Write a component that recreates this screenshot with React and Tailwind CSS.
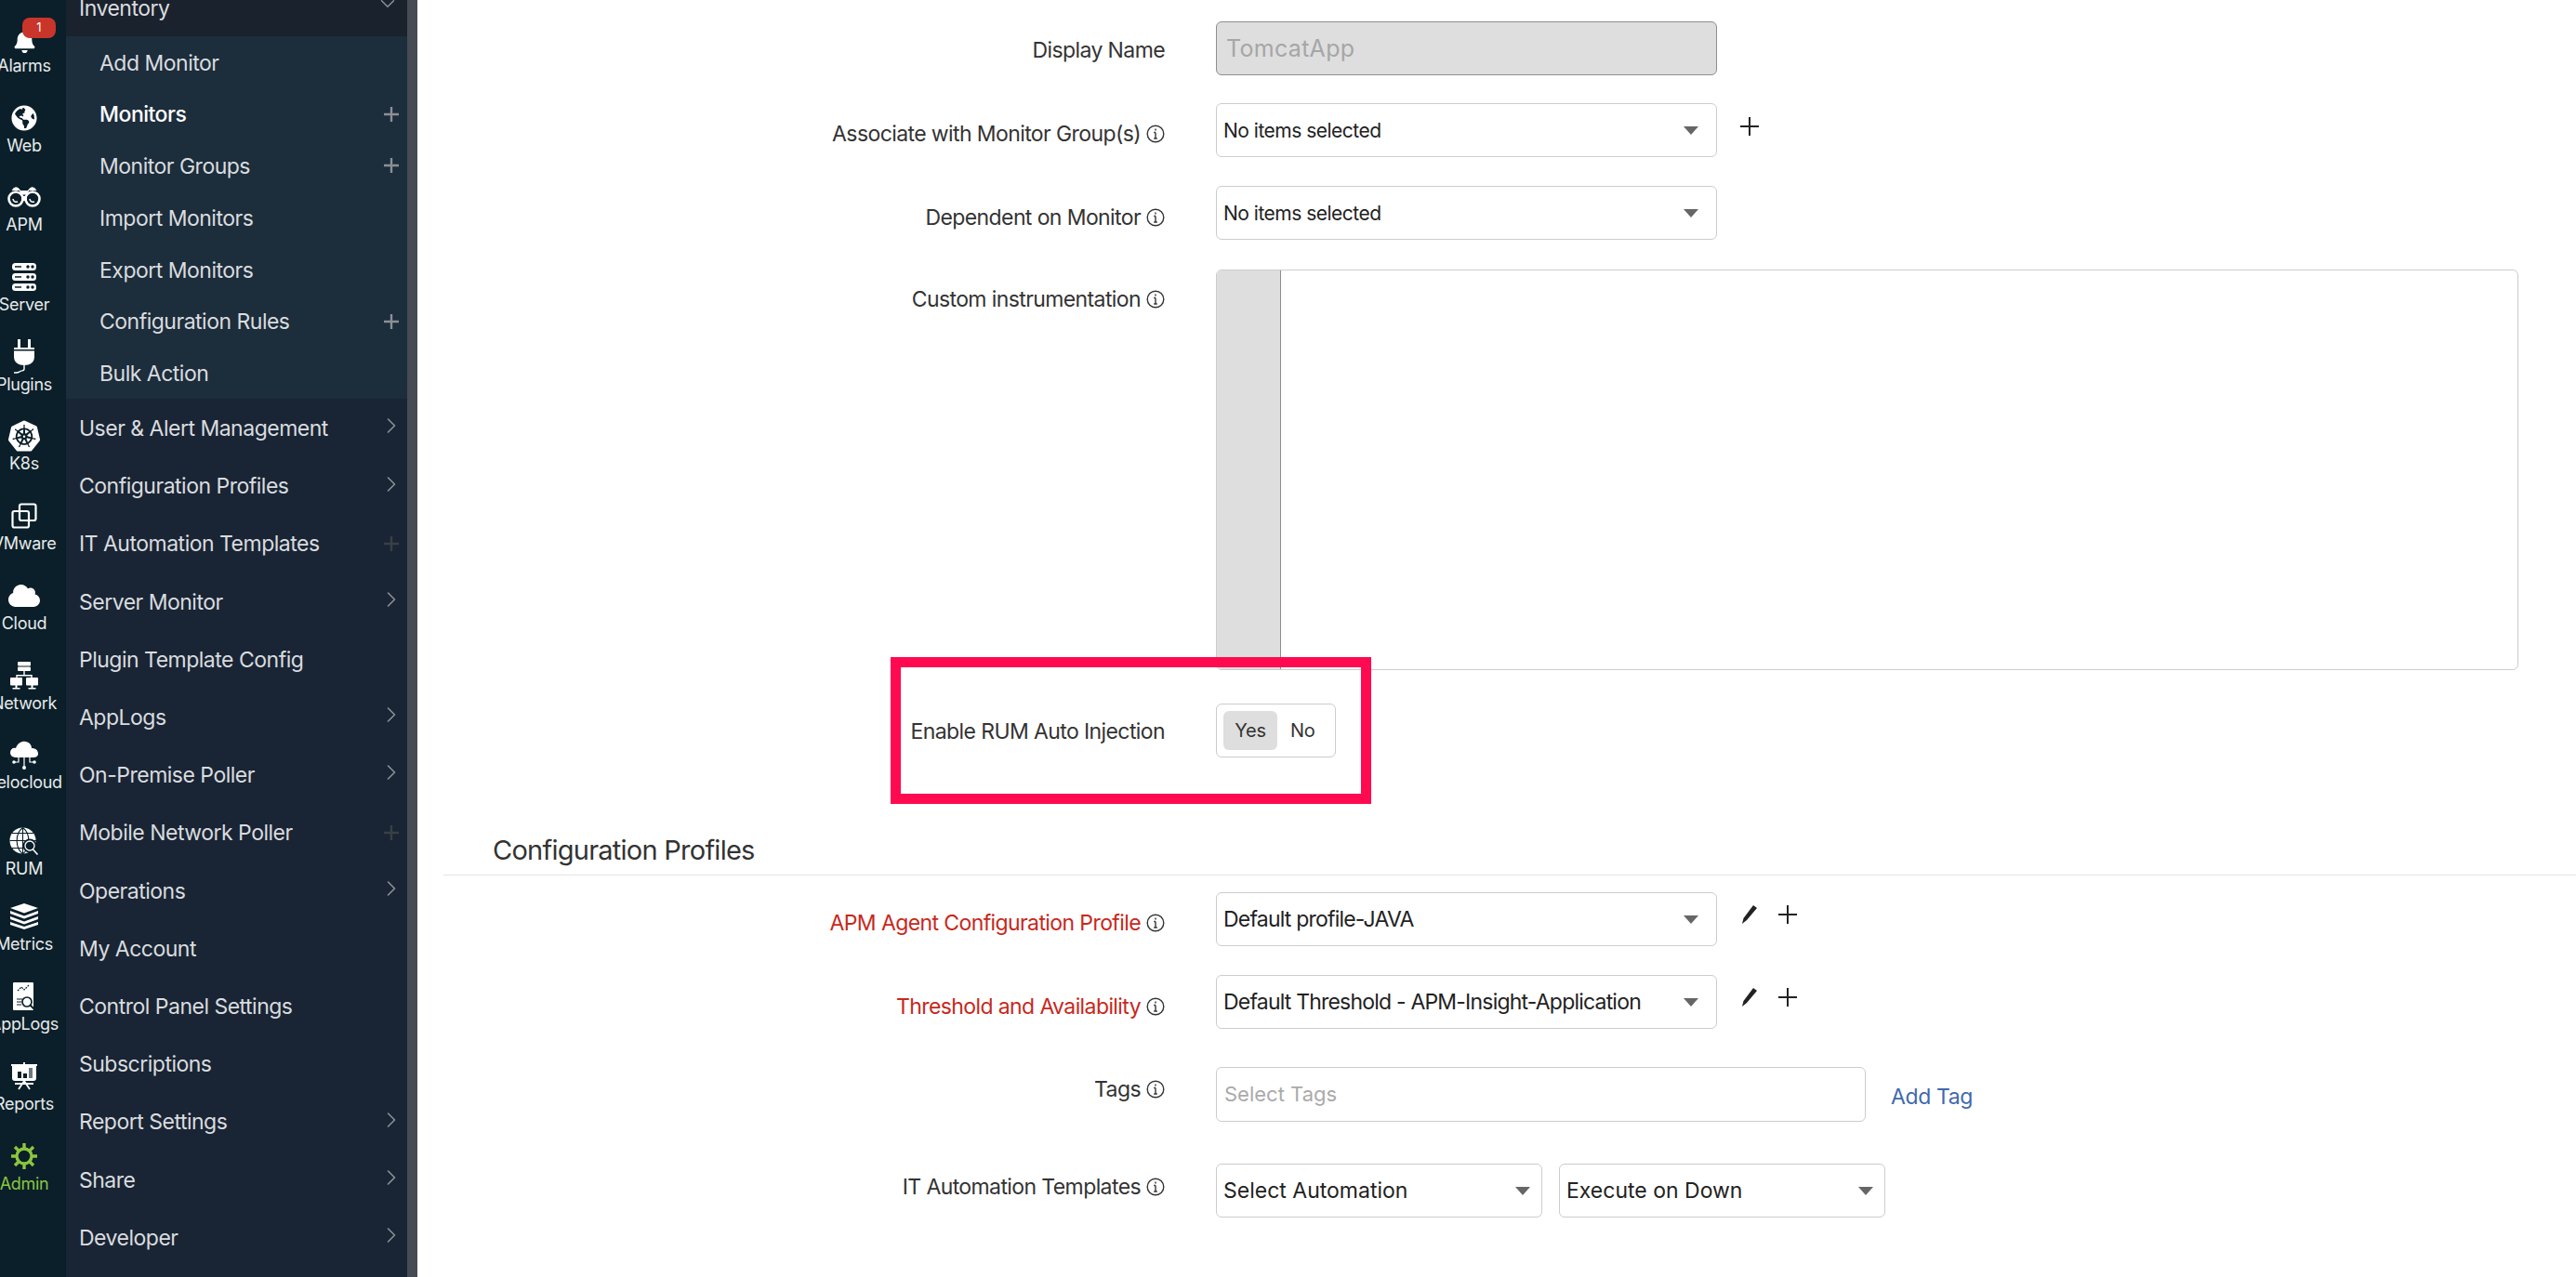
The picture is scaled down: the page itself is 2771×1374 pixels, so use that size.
import { ChevronRight, ChevronDown } from 'lucide-react';
import { FaBell, FaGlobeAmericas, FaCloud } from 'react-icons/fa';
import { SiKubernetes } from 'react-icons/si';

const Binoculars = () => (
  <svg width="36" height="24" viewBox="0 0 36 24" fill="none" stroke="white">
    <circle cx="9" cy="14" r="7.5" strokeWidth="2.6" />
    <circle cx="27" cy="14" r="7.5" strokeWidth="2.6" />
    <path d="M5 5 C7 1 11 1 13 4 L15 9 H21 L23 4 C25 1 29 1 31 5" fill="white" strokeWidth="1" />
    <path d="M15 11 h6 v5 h-6z" fill="white" strokeWidth="0" />
    <path d="M6 14 a3.5 3.5 0 0 0 5 3 M24 14 a3.5 3.5 0 0 0 5 3" strokeWidth="1.5" />
  </svg>
);

const Server = () => (
  <svg width="28" height="30" viewBox="0 0 28 30" fill="white">
    {[0, 11, 22].map(y => (
      <g key={y}>
        <rect x="1" y={y} width="26" height="8" rx="3.5" />
        <rect x="4" y={y + 3.2} width="7" height="1.5" fill="#0a1f29" />
        <circle cx="18" cy={y + 4} r="1.7" fill="#0a1f29" />
        <circle cx="23" cy={y + 4} r="1.7" fill="#0a1f29" />
      </g>
    ))}
  </svg>
);

const Plug = () => (
  <svg width="24" height="38" viewBox="0 0 24 38" fill="white">
    <rect x="5" y="0" width="3" height="9" />
    <rect x="16" y="0" width="3" height="9" />
    <rect x="1" y="9" width="22" height="2" />
    <path d="M1 12.5 H23 V19 C23 25 18 28 12 28 C6 28 1 25 1 19Z" />
    <path d="M12 28 V32 C12 35 9 33 7 35 C6 36 4 36 1 36" fill="none" stroke="white" strokeWidth="1.4" />
  </svg>
);

const VMware = () => (
  <svg width="28" height="28" viewBox="0 0 28 28" fill="none" stroke="white" strokeWidth="2.2">
    <rect x="9" y="1.5" width="17.5" height="17.5" rx="2" />
    <rect x="1.5" y="9" width="17.5" height="17.5" rx="2" />
  </svg>
);

const Network = () => (
  <svg width="30" height="30" viewBox="0 0 30 30" fill="white">
    <rect x="8" y="0" width="14" height="4.5" rx="1" />
    <rect x="8" y="5.5" width="14" height="4.5" rx="1" />
    <path d="M14.3 10 h1.4 v4 h8 v3 h-1.4 v-1.6 H7.7 V17 H6.3 v-3 h8z" />
    <rect x="0" y="17" width="13" height="8.5" rx="1" />
    <rect x="17" y="17" width="13" height="8.5" rx="1" />
    <path d="M5.5 25 h2 v3 h3 v1.5 h-8 V28 h3z M22.5 25 h2 v3 h3 v1.5 h-8 V28 h3z" />
  </svg>
);

const Velocloud = () => (
  <svg width="30" height="31" viewBox="0 0 30 31" fill="white">
    <path d="M6 18 C1 18 0 14 0 13 C0 9 3 7 6 8 C8 2 13 0 17 1 C21 2 23 5 23 8 C27 8 30 10 30 14 C30 17 27 18 25 18Z" />
    <path d="M15 18 V29 M9 18 V23 H4 M21 18 V23 H26" fill="none" stroke="white" strokeWidth="1.2" />
    <circle cx="15" cy="29" r="2" />
    <circle cx="4" cy="23" r="1.8" />
    <circle cx="26" cy="23" r="1.8" />
  </svg>
);

const Rum = () => (
  <svg width="32" height="31" viewBox="0 0 32 31" fill="none">
    <circle cx="14.5" cy="14.5" r="14" fill="white" />
    <path d="M14.5 0.5 V29 M0.5 14.5 H29 M3 6.5 H26 M3 22.5 H26 M14.5 0.5 C6 7 6 22 14.5 29 M14.5 0.5 C23 7 23 22 14.5 29" stroke="#0a1f29" strokeWidth="1.1" />
    <circle cx="22" cy="20" r="7.5" fill="#0a1f29" />
    <circle cx="22" cy="20" r="5" stroke="white" strokeWidth="1.3" />
    <path d="M25.5 24 L30.5 29.5" stroke="white" strokeWidth="1.6" />
  </svg>
);

const Layers = () => (
  <svg width="32" height="28" viewBox="0 0 32 28" fill="white">
    <path d="M16 0 L31 5 L16 10.5 L1 5Z" />
    <path d="M1 8 L16 13.5 L31 8 V11 L16 16.5 L1 11Z" />
    <path d="M1 14 L16 19.5 L31 14 V17 L16 22.5 L1 17Z" />
    <path d="M1 20 L16 25 L31 20 V23 L16 28 L1 23Z" />
  </svg>
);

const AppLogsIcon = () => (
  <svg width="24" height="30" viewBox="0 0 24 30" fill="white">
    <path d="M1 0 H21 C22 0 22 1 22 1 V29 C22 30 21 30 21 30 H1 C0 30 0 29 0 29 V1 C0 0 1 0 1 0Z" />
    <path d="M5 9 L9 5 L12 8 L17 3" fill="none" stroke="#0a1f29" strokeWidth="1.2" strokeDasharray="2 1" />
    <path d="M4 18 h6 M4 21 h5 M4 24 h5" stroke="#0a1f29" strokeWidth="1.1" />
    <circle cx="15" cy="21" r="5" fill="white" stroke="#0a1f29" strokeWidth="1.7" />
    <path d="M18.5 24.5 L22.5 28.5" stroke="#0a1f29" strokeWidth="2" />
  </svg>
);

const Board = () => (
  <svg width="28" height="30" viewBox="0 0 28 30" fill="white">
    <rect x="0" y="2" width="28" height="2" />
    <path d="M1 4 H27 V17 C27 19 26 20 24 20 H4 C2 20 1 19 1 17Z" />
    <rect x="13" y="0" width="2" height="2" />
    <rect x="7" y="10" width="4" height="7" fill="#0a1f29" />
    <rect x="13" y="12" width="4" height="5" fill="#0a1f29" />
    <rect x="19" y="6" width="4" height="11" fill="#0a1f29" opacity="0.6" />
    <path d="M14 20 L8 29 M14 20 L20 29 M4 23 H24" stroke="white" strokeWidth="1.8" />
  </svg>
);

const Gear = () => (
  <svg width="30" height="30" viewBox="0 0 30 30" fill="none" stroke="#8cc63f">
    <circle cx="15" cy="15" r="8" strokeWidth="3.4" />
    <path d="M15 1 V7 M15 23 V29 M1 15 H7 M23 15 H29 M5 5 L9.5 9.5 M20.5 20.5 L25 25 M25 5 L20.5 9.5 M9.5 20.5 L5 25" strokeWidth="3.4" />
  </svg>
);

const rail = [
  { label: 'Alarms', icon: <FaBell size={25} color="white" className="mt-[6px]" />, h: 'h-[85.7px]', badge: true },
  { label: 'Web', icon: <FaGlobeAmericas size={28} color="white" />, h: 'h-[85.7px]' },
  { label: 'APM', icon: <Binoculars />, h: 'h-[85.7px]' },
  { label: 'Server', icon: <Server />, h: 'h-[85.7px]' },
  { label: 'Plugins', icon: <Plug />, h: 'h-[85.7px]' },
  { label: 'K8s', icon: <SiKubernetes size={34} color="white" />, h: 'h-[85.7px]' },
  { label: 'VMware', icon: <VMware />, h: 'h-[85.7px]' },
  { label: 'Cloud', icon: <FaCloud size={34} color="white" />, h: 'h-[85.7px]' },
  { label: 'Network', icon: <Network />, h: 'h-[85.7px]' },
  { label: 'Velocloud', icon: <Velocloud />, h: 'h-[93px]' },
  { label: 'RUM', icon: <Rum />, h: 'h-[81px]' },
  { label: 'Metrics', icon: <Layers />, h: 'h-[86px]' },
  { label: 'AppLogs', icon: <AppLogsIcon />, h: 'h-[86px]' },
  { label: 'Reports', icon: <Board />, h: 'h-[86px]' },
  { label: 'Admin', icon: <Gear />, h: 'h-[86px]', active: true },
];

const subItems = [
  { label: 'Add Monitor' },
  { label: 'Monitors', plus: true, bold: true },
  { label: 'Monitor Groups', plus: true },
  { label: 'Import Monitors' },
  { label: 'Export Monitors' },
  { label: 'Configuration Rules', plus: true },
  { label: 'Bulk Action' },
];

const menuItems = [
  { label: 'User & Alert Management', arrow: true },
  { label: 'Configuration Profiles', arrow: true },
  { label: 'IT Automation Templates', dimPlus: true },
  { label: 'Server Monitor', arrow: true },
  { label: 'Plugin Template Config' },
  { label: 'AppLogs', arrow: true },
  { label: 'On-Premise Poller', arrow: true },
  { label: 'Mobile Network Poller', dimPlus: true },
  { label: 'Operations', arrow: true },
  { label: 'My Account' },
  { label: 'Control Panel Settings' },
  { label: 'Subscriptions' },
  { label: 'Report Settings', arrow: true },
  { label: 'Share', arrow: true },
  { label: 'Developer', arrow: true },
];

function PlusIcon({ size = 16, color = '#8b8f95', width = 2.4 }) {
  return (
    <svg width={size} height={size} viewBox="0 0 16 16" stroke={color} strokeWidth={width}>
      <path d="M8 0 V16 M0 8 H16" />
    </svg>
  );
}

function Info() {
  return (
    <svg width="20" height="20" viewBox="0 0 20 20" fill="none" stroke="#333" className="ml-[6px] shrink-0">
      <circle cx="10" cy="10" r="8.8" strokeWidth="1.4" />
      <path d="M10 8.5 V15 M8.2 8.5 H10 M8.2 15 H11.8 M10 4.6 V6.6" strokeWidth="1.4" />
    </svg>
  );
}

function Pencil() {
  return (
    <svg width="18" height="20" viewBox="0 0 18 20" fill="#222">
      <path d="M13 0 L17 3 L6 16 L1 20 L2.5 14Z" />
    </svg>
  );
}

function Caret() {
  return (
    <svg width="16" height="9" viewBox="0 0 16 9" fill="#666" className="shrink-0">
      <path d="M0 0 H16 L8 9Z" />
    </svg>
  );
}

function Select({ value, className }) {
  return (
    <div className={`flex h-[58px] items-center justify-between rounded-[6px] border border-[#cccccc] bg-white pl-[7px] text-[#222] ${className}`}>
      <span className="mt-[1px] whitespace-nowrap">{value}</span>
      <Caret />
    </div>
  );
}

function Row({ label, info, red, labelTop, className = '', children }) {
  return (
    <div className={`flex items-start ${className}`}>
      <div className={`flex w-[804px] shrink-0 items-center justify-end text-[23px] leading-[30px] tracking-[-0.6px] ${labelTop} ${red ? 'text-[#c7281c]' : 'text-[#333]'}`}>
        <span className="whitespace-nowrap">{label}</span>
        {info && <Info />}
      </div>
      <div className="ml-[55px] flex flex-1 items-start">{children}</div>
    </div>
  );
}

export default function App() {
  return (
    <div className="relative flex h-[1374px] w-full overflow-hidden bg-white font-['Inter',sans-serif]">
      {/* Icon rail */}
      <div className="flex w-[71px] shrink-0 flex-col overflow-hidden bg-[#0a1f29] pt-[23px]">
        {rail.map(r => (
          <div key={r.label} className={`relative flex w-[52px] shrink-0 flex-col items-center ${r.h}`}>
            <div className="flex h-[36px] items-center justify-center">{r.icon}</div>
            <span className={`whitespace-nowrap text-[18px] leading-[24px] tracking-[-0.3px] ${r.active ? 'text-[#8cc63f]' : 'text-[#e8eaeb]'}`}>{r.label}</span>
            {r.badge && (
              <span className="absolute left-[24px] top-[-4px] flex h-[22px] w-[36px] items-center justify-center rounded-[8px] bg-[#c9352a] text-[13px] text-white">1</span>
            )}
          </div>
        ))}
      </div>

      {/* Menu */}
      <div className="w-[367px] shrink-0 bg-[#192535] text-[23px] tracking-[-0.5px] text-[#dadcdf]">
        <div className="-mt-[23px] flex h-[62px] items-center justify-between bg-[#1a222e] pl-[14px] pr-[8px]">
          <span className="mt-[2px]">Inventory</span>
          <ChevronDown size={26} color="#8b8f95" strokeWidth={1.4} className="-mt-[8px]" />
        </div>
        <div className="bg-[#1c2d3c]">
          {subItems.map(s => (
            <div key={s.label} className="flex h-[55.75px] items-center justify-between pl-[36px] pr-[9px]">
              <span className={`mt-[2px] ${s.bold ? 'font-medium text-white' : ''}`}>{s.label}</span>
              {s.plus && <PlusIcon />}
            </div>
          ))}
        </div>
        {menuItems.map(m => (
          <div key={m.label} className="flex h-[62.2px] items-center justify-between pl-[14px] pr-[9px]">
            <span className="mt-[2px]">{m.label}</span>
            {m.arrow && <ChevronRight size={28} color="#8b8f95" strokeWidth={1.4} className="-mr-[6px] -mt-[4px]" />}
            {m.dimPlus && <PlusIcon color="#3a3f45" />}
          </div>
        ))}
      </div>

      {/* Scrollbar track */}
      <div className="w-[11px] shrink-0 bg-[#474b53]" />

      {/* Form */}
      <div className="flex min-w-0 flex-1 flex-col pt-[23px]">
        <Row label="Display Name" labelTop="pt-[16px]">
          <div className="flex h-[58px] w-[539px] items-center rounded-[6px] border border-[#8e8e8e] bg-[#dedede] pl-[10px] text-[25px] tracking-[0.3px] text-[#a6a6a6]">
            <span className="mt-[1px]">TomcatApp</span>
          </div>
        </Row>
        <Row label="Associate with Monitor Group(s)" info labelTop="pt-[18px]" className="mt-[30px]">
          <Select value="No items selected" className="w-[539px] pr-[19px] text-[21px] tracking-[-0.5px]" />
          <div className="ml-[25px] mt-[15px]"><PlusIcon size={20} color="#222" width={1.6} /></div>
        </Row>
        <Row label="Dependent on Monitor" info labelTop="pt-[19px]" className="mt-[31px]">
          <Select value="No items selected" className="w-[539px] pr-[19px] text-[21px] tracking-[-0.5px]" />
        </Row>
        <Row label="Custom instrumentation" info labelTop="pt-[17px]" className="mt-[32px]">
          <div className="mr-[62px] flex h-[431px] flex-1 overflow-hidden rounded-[6px] border border-[#cccccc]">
            <div className="w-[69px] border-r border-[#8e8e8e] bg-[#dedede]" />
          </div>
        </Row>
        <Row label="Enable RUM Auto Injection" labelTop="pt-[15px]" className="mt-[36px]">
          <div className="flex h-[58px] w-[129px] items-center rounded-[6px] border border-[#cccccc] px-[7px] text-[20px] tracking-[-0.3px] text-[#333]">
            <span className="flex h-[42px] w-[58px] items-center justify-center rounded-[6px] bg-[#dedede]">Yes</span>
            <span className="ml-[14px]">No</span>
          </div>
        </Row>

        <div className="ml-[28px] mt-[81px] border-b border-[#e4e4e4] pb-[7px] pl-[53px] text-[29px] leading-[38px] tracking-[-0.75px] text-[#333]">Configuration Profiles</div>

        <Row label="APM Agent Configuration Profile" info red labelTop="pt-[18px]" className="mt-[18px]">
          <Select value="Default profile-JAVA" className="w-[539px] pr-[19px] text-[23px] tracking-[-0.8px]" />
          <div className="ml-[26px] mt-[14px] flex items-center gap-[22px]"><Pencil /><PlusIcon size={20} color="#222" width={1.6} /></div>
        </Row>
        <Row label="Threshold and Availability" info red labelTop="pt-[19px]" className="mt-[31px]">
          <Select value="Default Threshold - APM-Insight-Application" className="w-[539px] pr-[19px] text-[23px] tracking-[-0.8px]" />
          <div className="ml-[26px] mt-[14px] flex items-center gap-[22px]"><Pencil /><PlusIcon size={20} color="#222" width={1.6} /></div>
        </Row>
        <Row label="Tags" info labelTop="pt-[9px]" className="mt-[41px]">
          <div className="flex h-[59px] w-[699px] items-center rounded-[6px] border border-[#cccccc] pl-[8px] text-[22px] text-[#aaaaaa]">Select Tags</div>
          <a className="ml-[27px] mt-[15px] text-[23px] tracking-[-0.4px] text-[#3f68ad]">Add Tag</a>
        </Row>
        <Row label="IT Automation Templates" info labelTop="pt-[10px]" className="mt-[45px]">
          <Select value="Select Automation" className="w-[351px] pr-[12px] text-[23px]" />
          <Select value="Execute on Down" className="ml-[18px] w-[351px] pr-[12px] text-[23px]" />
        </Row>
      </div>

      {/* Annotation box */}
      <div className="absolute left-[958px] top-[707px] h-[158px] w-[517px] border-[11px] border-[#ff0a50]" />
    </div>
  );
}
